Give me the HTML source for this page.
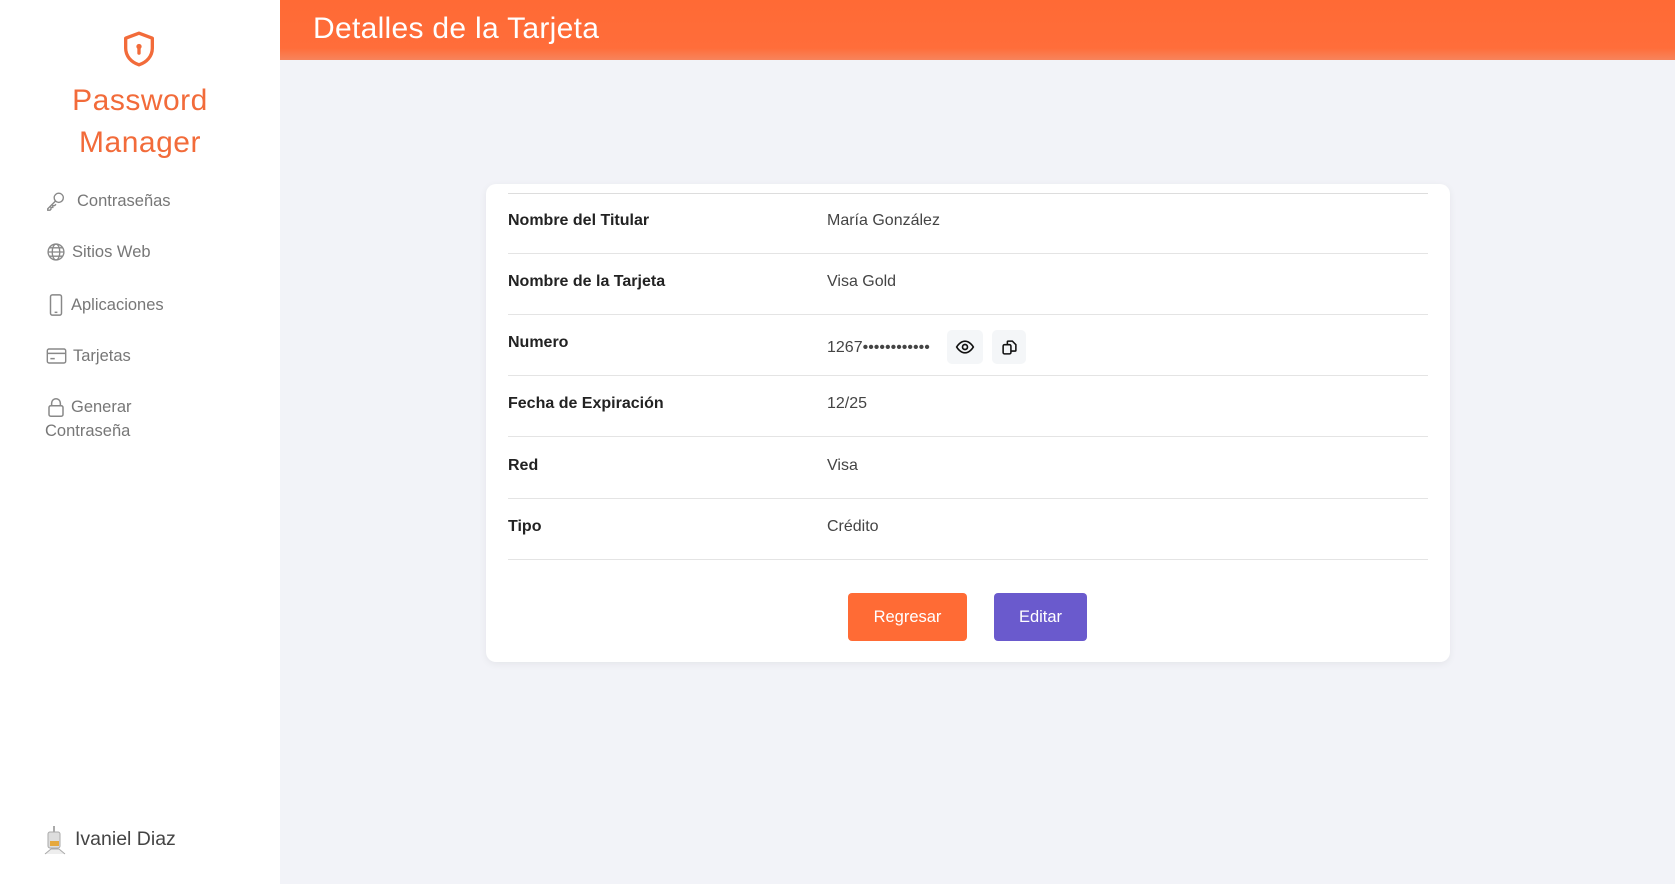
<!DOCTYPE html>
<html><head><meta charset="utf-8"><style>
*{margin:0;padding:0;box-sizing:border-box}
body{width:1675px;height:884px;background:#f2f3f8;font-family:"Liberation Sans",sans-serif;position:relative;overflow:hidden}
.side{position:absolute;left:0;top:0;width:280px;height:884px;background:#fff}
.logo{position:absolute;left:119px;top:29px}
.brand{position:absolute;left:0;width:280px;text-align:center;color:#f26b3a;font-size:30px;line-height:42px;top:80px;letter-spacing:0.5px}
.nav{position:absolute;color:#777;font-size:16.5px;display:flex;align-items:center;gap:6px}
.head{position:absolute;left:280px;top:0;right:0;height:60px;background:linear-gradient(#ff6a35,#ff6d3a 80%,#f7845c);color:#fff;font-size:30px;padding-left:33px;line-height:58px;letter-spacing:0.3px}
.card{position:absolute;left:486px;top:184px;width:964px;height:478px;background:#fff;border-radius:10px;box-shadow:0 2px 8px rgba(0,0,0,.06)}
.top{position:absolute;left:22px;right:22px;top:9px;border-top:1px solid #ddd}
.row{position:absolute;left:22px;right:22px;height:61px;border-bottom:1px solid #e4e4e4;font-size:16px;color:#222}
.row b{position:absolute;left:0;top:19px;line-height:18px;font-weight:bold;color:#222}
.row span{position:absolute;left:319px;top:19px;line-height:18px;color:#444}
.ib{position:absolute;width:36px;height:34px;background:#f4f6f8;border-radius:5px;top:-9px;display:flex;align-items:center;justify-content:center}
.btn{position:absolute;top:409px;height:48px;border-radius:4px;color:#fff;font-size:16.5px;text-align:center;line-height:48px}
</style></head><body>
<div class="side">
<svg class="logo" width="40" height="40" viewBox="0 0 24 24" fill="none" stroke="#f26b3a" stroke-width="2" stroke-linejoin="round"><path d="M12 2.5l8 3v6c0 5-3.5 8.5-8 10-4.5-1.5-8-5-8-10v-6z"/><circle cx="12" cy="10.5" r="1.6" fill="#f26b3a" stroke="none"/><path d="M12 11v3.5" stroke-linecap="round"/></svg>
<div class="brand">Password<br>Manager</div>
<div class="nav" style="left:45px;top:190px"><svg width="22" height="22" viewBox="0 0 24 24" fill="none" stroke="#888" stroke-width="1.5"><circle cx="15" cy="8.5" r="5"/><path d="M11.5 12L3 20.5v1.5h2.5l1-1v-2h2v-2h2l1.5-1.5"/></svg><span style="margin-left:4px">Contraseñas</span></div>
<div class="nav" style="left:46px;top:242px"><svg width="20" height="20" viewBox="0 0 24 24" fill="none" stroke="#888" stroke-width="1.6"><circle cx="12" cy="12" r="9.5"/><ellipse cx="12" cy="12" rx="4.5" ry="9.5"/><path d="M2.5 12h19M4 7h16M4 17h16"/></svg>Sitios Web</div>
<div class="nav" style="left:47px;top:294px"><svg width="18" height="22" viewBox="0 0 18 24" fill="none" stroke="#888" stroke-width="1.6"><rect x="3" y="1" width="12" height="22" rx="2"/><path d="M7.5 20h3"/></svg>Aplicaciones</div>
<div class="nav" style="left:46px;top:346px"><svg width="21" height="20" viewBox="0 0 24 22" fill="none" stroke="#888" stroke-width="1.6"><rect x="1.5" y="3" width="21" height="16" rx="2"/><path d="M1.5 8h21M5 14h5"/></svg>Tarjetas</div>
<div class="nav" style="left:47px;top:397px"><svg width="18" height="21" viewBox="0 0 20 24" fill="none" stroke="#888" stroke-width="1.7"><rect x="2" y="10" width="16" height="12" rx="2"/><path d="M5 10V7a5 5 0 0110 0v3"/></svg>Generar</div>
<div class="nav" style="left:45px;top:422px">Contraseña</div>
<svg style="position:absolute;left:42px;top:824px" width="26" height="34" viewBox="0 0 26 34"><rect x="11" y="2" width="2" height="6" fill="#aaa"/><rect x="6" y="8" width="12" height="16" rx="2" fill="#ddd" stroke="#aaa"/><rect x="8" y="17" width="9" height="5" fill="#e6a83c"/><path d="M3 30l6-5h8l6 5" stroke="#aaa" fill="#eee"/></svg>
<div class="nav" style="left:75px;top:828px;font-size:19.5px;color:#444">Ivaniel Diaz</div>
</div>
<div class="head">Detalles de la Tarjeta</div>
<div class="card">
<div class="top"></div>
<div class="row" style="top:9px"><b>Nombre del Titular</b><span>María González</span></div>
<div class="row" style="top:70px"><b>Nombre de la Tarjeta</b><span>Visa Gold</span></div>
<div class="row" style="top:131px"><b>Numero</b><span style="top:24px">1267••••••••••••
<div class="ib" style="left:120px"><svg width="20" height="20" viewBox="0 0 24 24" fill="none" stroke="#111" stroke-width="2"><path d="M2 12s4-7 10-7 10 7 10 7-4 7-10 7S2 12 2 12z"/><circle cx="12" cy="12" r="3"/></svg></div>
<div class="ib" style="left:165px;width:34px"><svg width="17" height="17" viewBox="0 0 24 24" fill="none" stroke="#111" stroke-width="2.2"><rect x="3" y="8" width="11" height="13" rx="2"/><path d="M9 8V4a1 1 0 011-1h6l5 5v8a1 1 0 01-1 1h-6"/></svg></div></span></div>
<div class="row" style="top:192px"><b>Fecha de Expiración</b><span>12/25</span></div>
<div class="row" style="top:254px"><b>Red</b><span>Visa</span></div>
<div class="row" style="top:315px"><b>Tipo</b><span>Crédito</span></div>
<div class="btn" style="left:362px;width:119px;background:#ff6b35">Regresar</div>
<div class="btn" style="left:508px;width:93px;background:#6a5acd">Editar</div>
</div>
</body></html>
